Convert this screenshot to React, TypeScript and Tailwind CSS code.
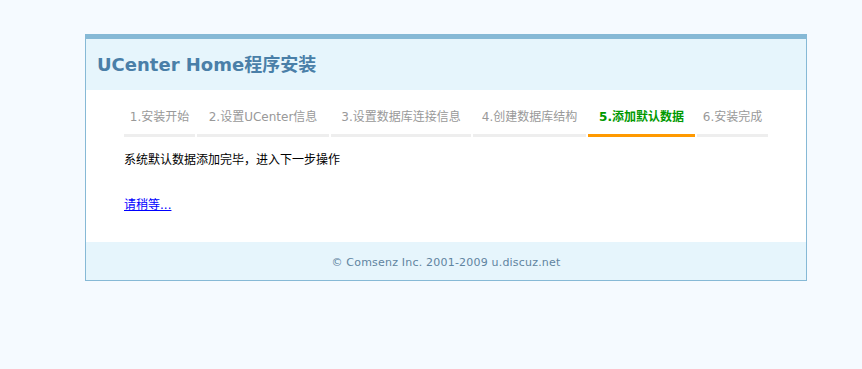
const tabs = [
  { label: '1.安装开始', w: 'w-[71px]' },
  { label: '2.设置UCenter信息', w: 'w-[132px]' },
  { label: '3.设置数据库连接信息', w: 'w-[140px]' },
  { label: '4.创建数据库结构', w: 'w-[113px]' },
  { label: '5.添加默认数据', w: 'w-[107px]', active: true },
  { label: '6.安装完成', w: 'w-[71px]' },
];

export default function App() {
  return (
    <div className="min-h-screen w-full bg-[#f5faff] pt-[34px] font-['DejaVu_Sans','Noto_Sans_CJK_SC',sans-serif]">
      <div className="ml-[85px] w-[722px] border border-t-[5px] border-[#86b9d6] bg-white">
        <div className="flex h-[51px] items-center bg-[#e6f5fc] pl-[11px]">
          <h1 className="text-[18px] font-bold text-[#4a7fa8]">UCenter Home程序安装</h1>
        </div>

        <div className="pl-[38px] pb-[28px]">
          <ul className="flex gap-[2px] pt-[10px]">
            {tabs.map((t) => (
              <li
                key={t.label}
                className={`${t.w} h-[37px] border-b-[3px] text-center text-[12px] leading-[34px] ${
                  t.active ? 'border-[#ff9900] font-bold text-[#009900]' : 'border-[#eeeeee] text-[#999999]'
                }`}
              >
                {t.label}
              </li>
            ))}
          </ul>
          <p className="mt-[14px] text-[12px] leading-[18px] text-black">系统默认数据添加完毕，进入下一步操作</p>
          <a href="#" className="mt-[27px] block w-fit text-[12px] leading-[18px] text-[#0000ff] underline">
            请稍等...
          </a>
        </div>

        <div className="flex h-[38px] items-center justify-center bg-[#e6f5fc] pt-[4px] text-[11px] tracking-[0.2px] text-[#5f84a0]">
          © Comsenz Inc. 2001-2009 u.discuz.net
        </div>
      </div>
    </div>
  );
}
